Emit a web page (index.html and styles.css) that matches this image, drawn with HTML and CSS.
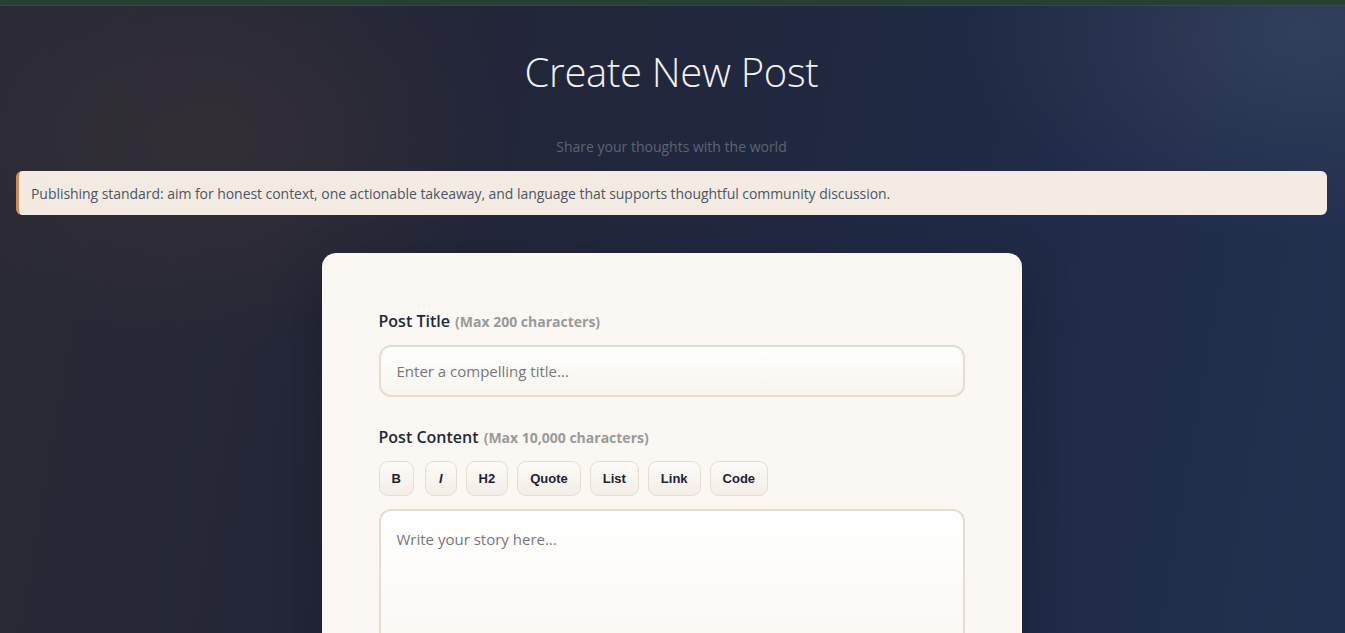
FILE: index.html
```html
<!DOCTYPE html>
<html lang="en">
<head>
<meta charset="utf-8">
<title>Create New Post</title>
<link rel="stylesheet" href="styles.css">
</head>
<body>
<div class="topbar"></div>
<main class="page">
  <header class="hero">
    <h1 class="hero-title">Create New Post</h1>
    <p class="hero-sub">Share your thoughts with the world</p>
  </header>
  <div class="notice">Publishing standard: aim for honest context, one actionable takeaway, and language that supports thoughtful community discussion.</div>
  <section class="card">
    <div class="field">
      <label class="label">Post Title <span class="hint">(Max 200 characters)</span></label>
      <input class="input" type="text" placeholder="Enter a compelling title...">
    </div>
    <div class="field">
      <label class="label">Post Content <span class="hint">(Max 10,000 characters)</span></label>
      <div class="toolbar">
        <button class="tool">B</button>
        <button class="tool tool-i">I</button>
        <button class="tool">H2</button>
        <button class="tool">Quote</button>
        <button class="tool">List</button>
        <button class="tool">Link</button>
        <button class="tool">Code</button>
      </div>
      <textarea class="textarea" placeholder="Write your story here..."></textarea>
    </div>
  </section>
</main>
</body>
</html>
```
FILE: styles.css
```css
* { box-sizing: border-box; }
html, body { margin: 0; height: 100%; }
body {
  font-family: "Open Sans", "Noto Sans", sans-serif;
  background:
    radial-gradient(ellipse 420px 300px at 220px 140px, rgba(120, 80, 50, 0.16), transparent 70%),
    radial-gradient(ellipse 480px 300px at 1300px 30px, rgba(120, 130, 150, 0.2), transparent 70%),
    linear-gradient(100deg, #2a2a35 0%, #222638 35%, #1f2a45 70%, #22304f 100%);
  overflow: hidden;
}
.topbar {
  height: 6px;
  background: #284034;
  border-bottom: 1px solid #3c4646;
}
.page {
  padding: 0 18px 0 16px;
}
.hero {
  text-align: center;
  padding-top: 43px;
}
.hero-title {
  margin: 0;
  font-weight: 300;
  font-size: 40px;
  line-height: 46px;
  color: #f3f1ee;
  letter-spacing: -0.3px;
}
.hero-sub {
  margin: 42px 0 0;
  font-size: 14px;
  line-height: 20px;
  color: #5d6475;
}
.notice {
  margin-top: 14px;
  background: linear-gradient(90deg, #f3ebe2, #f3ece3);
  border-left: 3px solid #d28a55;
  border-radius: 6px;
  height: 44px;
  display: flex;
  align-items: center;
  padding-left: 12px;
  font-size: 14px;
  letter-spacing: -0.05px;
  color: #4d5566;
}
.card {
  width: 700px;
  margin: 38px auto 0;
  background: #fbf8f3;
  border-radius: 14px;
  padding: 58px 57px 40px;
  box-shadow: 0 20px 50px rgba(0, 0, 0, 0.25);
}
.field + .field { margin-top: 30px; }
.label {
  display: block;
  font-size: 16px;
  font-weight: 600;
  line-height: 20px;
  color: #1e293b;
  margin-bottom: 13px;
}
.hint {
  font-size: 14px;
  font-weight: 700;
  color: #9a9a9a;
  margin-left: 1px;
}
.input, .textarea {
  display: block;
  width: 100%;
  border: 2px solid #e6ddcf;
  border-radius: 12px;
  background: linear-gradient(180deg, #ffffff, #f8f5ee);
  font-family: "Open Sans", "Noto Sans", sans-serif;
  font-size: 15px;
  color: #333;
  padding: 0 16px;
  outline: none;
}
.input { height: 52px; }
.input::placeholder, .textarea::placeholder { color: #777; }
.textarea {
  height: 200px;
  padding-top: 17px;
  resize: none;
  line-height: 22px;
}
.toolbar {
  display: flex;
  gap: 9px;
  margin-bottom: 13px;
}
.tool {
  height: 35px;
  padding: 0 12px;
  border: 1px solid #e6ddcf;
  border-radius: 9px;
  background: linear-gradient(180deg, #fdfbf8, #f3eee6);
  font-family: "Liberation Sans", Arial, sans-serif;
  font-weight: 700;
  font-size: 13px;
  color: #1f2230;
}
.tool + .tool-i { margin-left: 2px; }
.tool-i { font-style: italic; padding: 0 13px; }
```
